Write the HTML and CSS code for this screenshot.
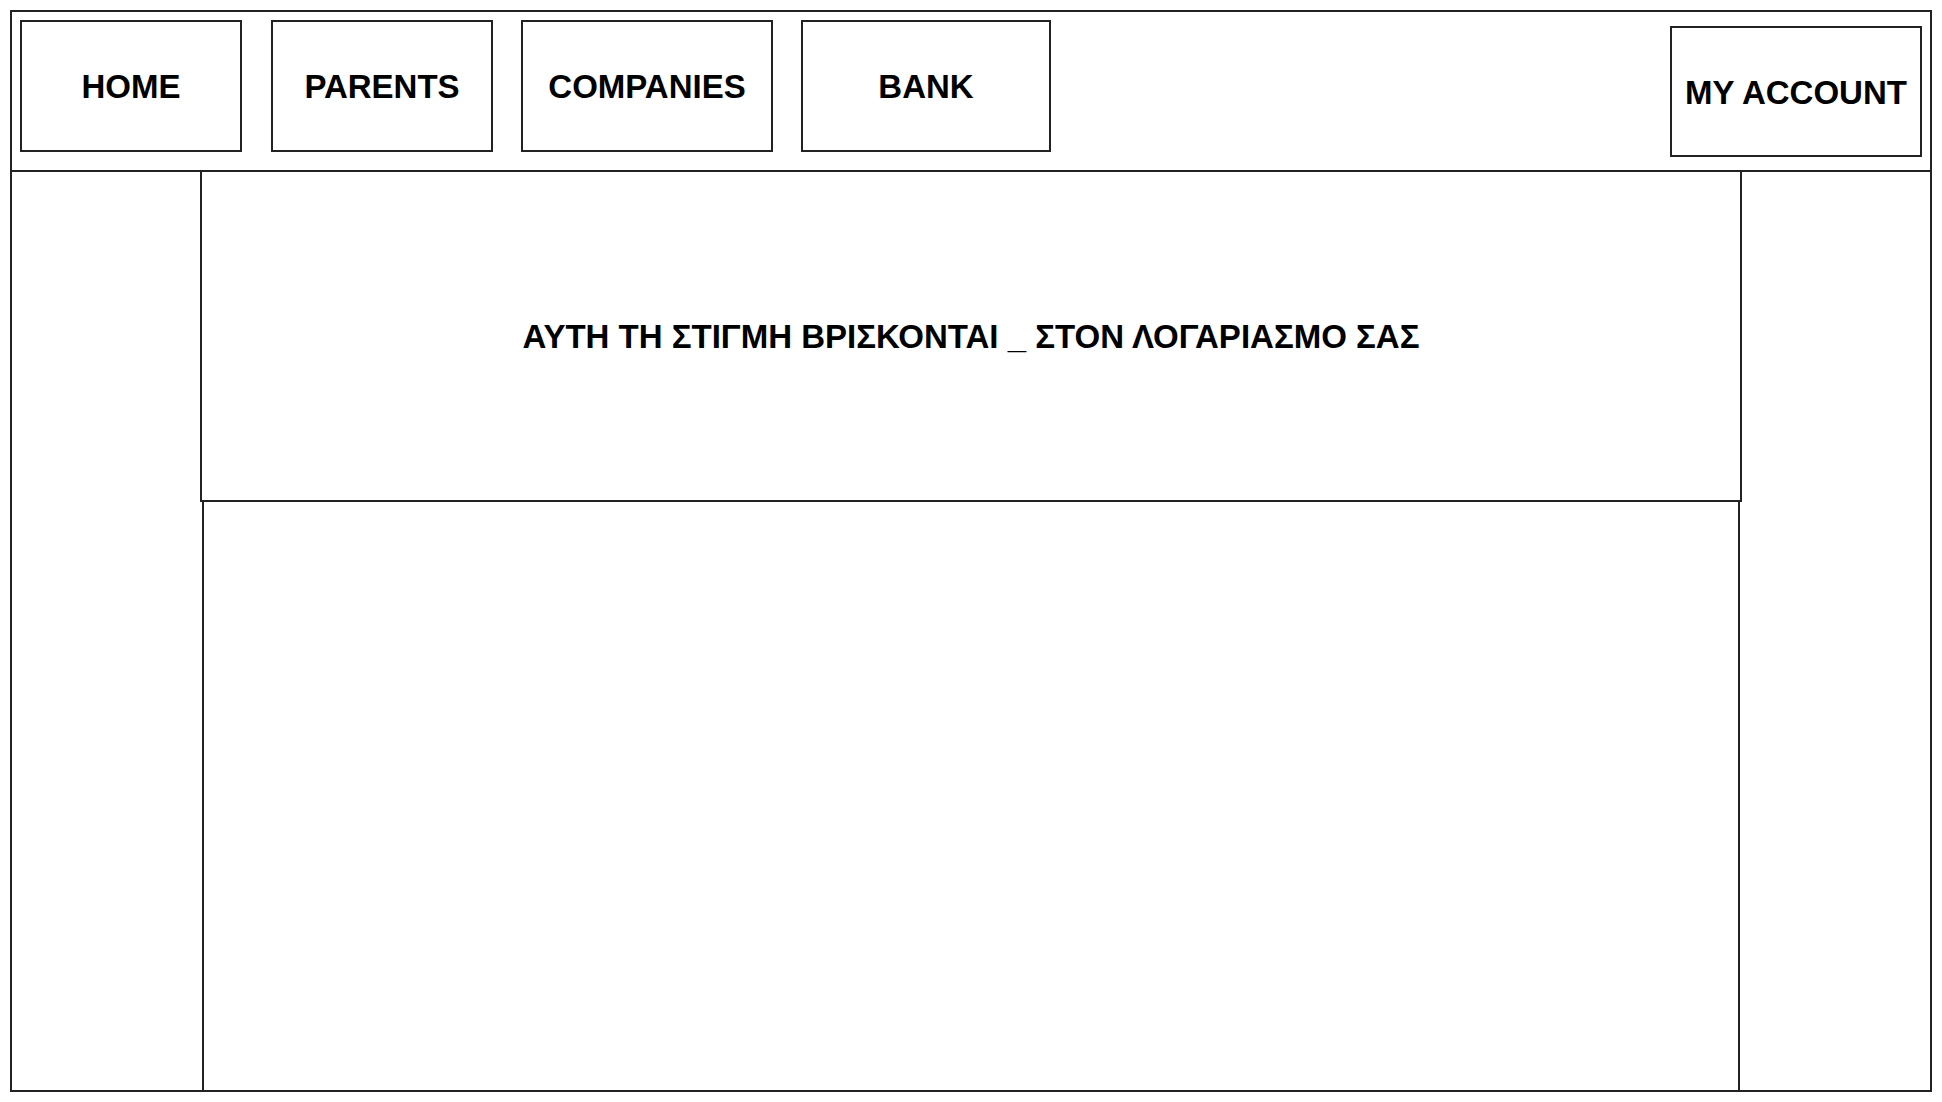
FILE: index.html
```html
<!DOCTYPE html>
<html lang="el">
<head>
<meta charset="utf-8">
<title>Account</title>
<link rel="stylesheet" href="styles.css">
</head>
<body>
<div class="frame">
  <header class="topbar">
    <nav class="nav">
      <a class="nav-btn w222">HOME</a>
      <a class="nav-btn w222">PARENTS</a>
      <a class="nav-btn w252">COMPANIES</a>
      <a class="nav-btn w250">BANK</a>
    </nav>
    <a class="nav-btn account">MY ACCOUNT</a>
  </header>
  <main class="body">
    <section class="banner">ΑΥΤΗ ΤΗ ΣΤΙΓΜΗ ΒΡΙΣΚΟΝΤΑΙ _ ΣΤΟΝ ΛΟΓΑΡΙΑΣΜΟ ΣΑΣ</section>
    <section class="content"></section>
  </main>
</div>
</body>
</html>
```

FILE: styles.css
```css
* { box-sizing: border-box; }
html, body { margin: 0; padding: 0; background: #fff; }
body {
  font-family: "Liberation Sans", Arial, sans-serif;
  color: #000;
}
.frame {
  margin: 10px 0 0 10px;
  width: 1922px;
  height: 1082px;
  border: 2px solid #222;
  display: flex;
  flex-direction: column;
}
.topbar {
  height: 160px;
  border-bottom: 2px solid #222;
  display: flex;
  justify-content: space-between;
  align-items: flex-start;
  padding: 8px 8px 0 8px;
}
.nav {
  display: flex;
  gap: 28px;
}
.nav .nav-btn:first-child { margin-right: 1px; }
.nav-btn {
  display: flex;
  align-items: center;
  justify-content: center;
  height: 132px;
  padding-top: 2px;
  border: 2px solid #222;
  font-weight: bold;
  font-size: 33px;
  text-decoration: none;
  color: #000;
}
.w222 { width: 222px; }
.w252 { width: 252px; }
.w250 { width: 250px; }
.account {
  width: 252px;
  height: 131px;
  margin-top: 6px;
}
.body {
  flex: 1;
  display: flex;
  flex-direction: column;
}
.banner {
  width: 1542px;
  height: 330px;
  margin: 0 auto;
  padding-top: 2px;
  border: 2px solid #222;
  border-top: none;
  display: flex;
  align-items: center;
  justify-content: center;
  font-weight: bold;
  font-size: 33px;
}
.content {
  flex: 1;
  width: 1538px;
  margin: 0 auto;
  border-left: 2px solid #222;
  border-right: 2px solid #222;
}
```
